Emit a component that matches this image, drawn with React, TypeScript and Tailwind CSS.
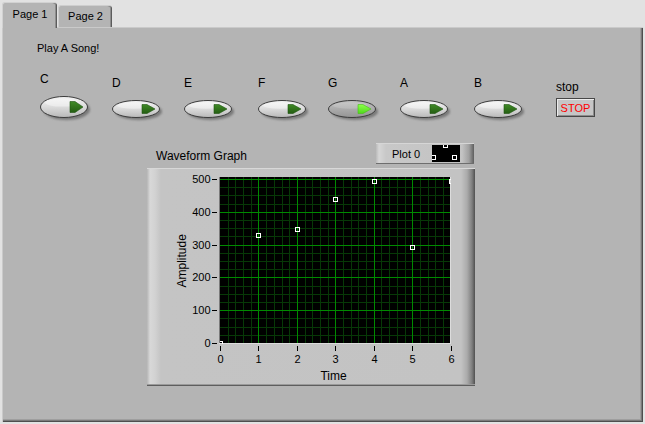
import React from "react";

const FF = "Liberation Sans, Arial, sans-serif";

function Oval({ pressed = false, h }: { pressed?: boolean; h: number }) {
  const cy = h / 2;
  const ry = h / 2 - 0.5;
  const th = h * 0.5;
  const gid = pressed ? "ovFillP" : "ovFill";
  const tid = pressed ? "triP" : "tri";
  return (
    <svg width={54} height={h + 5} className="block overflow-visible">
      <defs>
        <linearGradient id="ovFill" x1="0" y1="0" x2="0" y2="1">
          <stop offset="0" stopColor="#f4f4f4" />
          <stop offset="0.45" stopColor="#dedede" />
          <stop offset="1" stopColor="#b8b8b8" />
        </linearGradient>
        <linearGradient id="ovFillP" x1="0" y1="0" x2="0" y2="1">
          <stop offset="0" stopColor="#c2c2c2" />
          <stop offset="0.5" stopColor="#ababab" />
          <stop offset="1" stopColor="#959595" />
        </linearGradient>
        <linearGradient id="tri" x1="0" y1="0" x2="0" y2="1">
          <stop offset="0" stopColor="#3f8a26" />
          <stop offset="1" stopColor="#245d12" />
        </linearGradient>
        <linearGradient id="triP" x1="0" y1="0" x2="0" y2="1">
          <stop offset="0" stopColor="#8cff4a" />
          <stop offset="1" stopColor="#4fd81c" />
        </linearGradient>
        <filter id="ovBlur" x="-20%" y="-50%" width="140%" height="200%">
          <feGaussianBlur stdDeviation="1.3" />
        </filter>
      </defs>
      <ellipse cx={26.5} cy={cy + 2.5} rx={23.5} ry={ry} fill="#707070" opacity="0.85" filter="url(#ovBlur)" />
      <ellipse cx={24} cy={cy} rx={23.5} ry={ry} fill={`url(#${gid})`} stroke="#3c3c3c" strokeWidth="1" />
      <ellipse cx={22} cy={cy - ry * 0.42} rx={17} ry={ry * 0.38} fill="#ffffff" opacity={pressed ? 0.15 : 0.4} />
      <path
        d={`M30 ${cy - th / 2} L35 ${cy - th / 2} L43 ${cy} L35 ${cy + th / 2} L30 ${cy + th / 2} Z`}
        fill={`url(#${tid})`}
        stroke={pressed ? "#48c018" : "#1f5410"}
        strokeWidth="0.6"
        strokeLinejoin="round"
      />
    </svg>
  );
}

function Control({
  label,
  h,
  pressed,
  ml,
  mt,
}: {
  label: string;
  h: number;
  pressed?: boolean;
  ml: string;
  mt: string;
}) {
  return (
    <div className={`flex flex-col w-[48px] ${ml} ${mt}`}>
      <div className="text-[12px] leading-[14px] h-[14px]">{label}</div>
      <div className="mt-[10px]">
        <Oval h={h} pressed={pressed} />
      </div>
    </div>
  );
}

function Graph() {
  const X0 = 73;
  const XS = 38.45;
  const Y0 = 175;
  const YS = 0.328;
  const xs = (t: number) => X0 + XS * t;
  const ys = (v: number) => Y0 - YS * v;

  const minorX: number[] = [];
  const majorX: number[] = [];
  for (let k = 1; k <= 30; k++) {
    const x = Math.round(X0 + (XS * k) / 5) + 0.5;
    if (k % 5 === 0) majorX.push(x);
    else minorX.push(x);
  }
  const minorY: number[] = [];
  const majorY: number[] = [];
  for (let k = 1; k <= 20; k++) {
    const y = Math.round(Y0 - (32.8 * k) / 4) + 0.5;
    if (y < 9) continue;
    if (k % 4 === 0) majorY.push(y);
    else minorY.push(y);
  }

  const data = [0, 330, 349, 440, 494, 294, 494];

  return (
    <svg width={328} height={218} className="block" style={{ fontFamily: FF }}>
      <defs>
        <clipPath id="plotClip">
          <rect x={73} y={9} width={231} height={167} />
        </clipPath>
      </defs>
      <rect x={72} y={9} width={232} height={167} fill="#000" />
      <g clipPath="url(#plotClip)" shapeRendering="crispEdges">
        {minorX.map((x) => (
          <line key={"mx" + x} x1={x} x2={x} y1={9} y2={176} stroke="#073807" strokeWidth="1" />
        ))}
        {minorY.map((y) => (
          <line key={"my" + y} x1={73} x2={304} y1={y} y2={y} stroke="#073807" strokeWidth="1" />
        ))}
        {majorX.map((x) => (
          <line key={"Mx" + x} x1={x} x2={x} y1={9} y2={176} stroke="#008a00" strokeWidth="1" />
        ))}
        {majorY.map((y) => (
          <line key={"My" + y} x1={73} x2={304} y1={y} y2={y} stroke="#008a00" strokeWidth="1" />
        ))}
      </g>
      <g shapeRendering="crispEdges">
        <line x1={72.5} x2={72.5} y1={9} y2={176} stroke="#7a7a7a" />
        <line x1={303.5} x2={303.5} y1={9} y2={176} stroke="#dcdcdc" />
        <line x1={72} x2={304} y1={175.5} y2={175.5} stroke="#dcdcdc" />
      </g>
      <g clipPath="url(#plotClip)" shapeRendering="crispEdges">
        {data.map((v, t) => {
          const cx = Math.round(xs(t));
          const cy = Math.round(ys(v));
          return (
            <rect
              key={"p" + t}
              x={cx - 2 + 0.5}
              y={cy - 2 + 0.5}
              width={4}
              height={4}
              fill="none"
              stroke="#ffffff"
              strokeWidth="1"
            />
          );
        })}
      </g>
      {[0, 100, 200, 300, 400, 500].map((v) => {
        const y = Math.round(ys(v)) + 0.5;
        return (
          <g key={"yt" + v}>
            <line x1={65} x2={70} y1={y} y2={y} stroke="#000" shapeRendering="crispEdges" />
            <text x={63.5} y={y + 3.7} fontSize="11" textAnchor="end" fill="#000">
              {v}
            </text>
          </g>
        );
      })}
      {[0, 1, 2, 3, 4, 5, 6].map((t) => {
        const x = Math.round(xs(t)) + 0.5;
        return (
          <g key={"xt" + t}>
            <line x1={x} x2={x} y1={178} y2={183} stroke="#000" shapeRendering="crispEdges" />
            <text x={x} y={194.7} fontSize="11" textAnchor="middle" fill="#000">
              {t}
            </text>
          </g>
        );
      })}
      <text transform="translate(38.5,92.8) rotate(-90)" fontSize="12" textAnchor="middle" fill="#000">
        Amplitude
      </text>
      <text x={186.5} y={212} fontSize="12" textAnchor="middle" fill="#000">
        Time
      </text>
    </svg>
  );
}

export default function App() {
  return (
    <div className="w-[645px] h-[424px] bg-[#e2e2e2] overflow-hidden font-['Liberation_Sans',Arial,sans-serif] text-black">
      {/* Tabs */}
      <div className="flex items-end h-[27px] pl-[2px]">
        <div className="relative z-10 -mb-px h-[26px] w-[55px] bg-[#b4b4b4] rounded-t-[3px] border-t border-l border-[#d2d2d2] shadow-[inset_-1px_0_0_#5c5c5c,inset_-2px_0_0_#8e8e8e] flex justify-center pt-[5px] text-[11px] leading-[13px]">
          Page 1
        </div>
        <div className="ml-px h-[22px] w-[54px] bg-[#b4b4b4] rounded-t-[3px] border-t border-l border-[#cecece] shadow-[inset_-1px_0_0_#5c5c5c,inset_-2px_0_0_#8e8e8e] flex justify-center pt-[4px] text-[11px] leading-[13px]">
          Page 2
        </div>
      </div>

      {/* Panel */}
      <div className="ml-[2px] w-[641px] h-[395px] bg-[#b4b4b4] shadow-[inset_1px_1px_0_#cacaca,inset_-1px_-1px_0_#4e4e4e,inset_-2px_-2px_0_#7a7a7a,inset_-3px_-3px_0_#9e9e9e] pt-[14px] pl-[35px] flex flex-col items-start">
        <div className="text-[11px] leading-[14px] h-[14px]">Play A Song!</div>

        {/* Controls */}
        <div className="mt-[17px] h-[50px] flex items-start">
          <Control label="C" h={22} ml="ml-[3px]" mt="mt-0" />
          <Control label="D" h={18} ml="ml-[24px]" mt="mt-[4px]" />
          <Control label="E" h={18} ml="ml-[24px]" mt="mt-[4px]" />
          <Control label="F" h={18} ml="ml-[26px]" mt="mt-[4px]" />
          <Control label="G" h={18} pressed ml="ml-[22px]" mt="mt-[4px]" />
          <Control label="A" h={18} ml="ml-[24px]" mt="mt-[4px]" />
          <Control label="B" h={18} ml="ml-[26px]" mt="mt-[4px]" />
          <div className="ml-[34px] mt-[8px] flex flex-col">
            <div className="text-[12px] leading-[14px] h-[14px]">stop</div>
            <div className="mt-[4px] w-[39px] h-[19px] border border-[#474747] bg-[#c6c6c6] shadow-[inset_1px_1px_0_#ececec,inset_-1px_-1px_0_#8c8c8c] flex justify-center pt-[3px] text-[11px] leading-[13px] text-[#ff0000]">
              STOP
            </div>
          </div>
        </div>

        {/* Waveform graph */}
        <div className="mt-[21px] ml-[110px] w-[328px] flex flex-col">
          <div className="h-[25px] flex justify-between items-start">
            <div className="mt-[6px] ml-[9px] text-[12px] leading-[14px]">Waveform Graph</div>
            <div className="mr-px w-[98px] h-[21px] flex items-center pl-[16px] bg-[linear-gradient(to_right,#bababa_0px,#d6d6d6_3px,#c8c8c8_10px,#c3c3c3_86px,#a0a0a0_93px,#5e5e5e_98px)] shadow-[inset_0_1px_0_#d6d6d6,inset_0_-1px_0_#6e6e6e]">
              <span className="w-[40px] text-[11px] leading-[14px]">Plot 0</span>
              <svg width={28} height={17} className="block bg-black" shapeRendering="crispEdges">
                <rect x={11.5} y={-1.5} width={4} height={4} fill="none" stroke="#fff" />
                <rect x={-0.5} y={10.5} width={4} height={4} fill="none" stroke="#fff" />
                <rect x={20.5} y={10.5} width={4} height={4} fill="none" stroke="#fff" />
              </svg>
            </div>
          </div>
          <div className="w-[328px] h-[218px] bg-[linear-gradient(to_right,#b6b6b6_0px,#d8d8d8_3px,#d2d2d2_8px,#c4c4c4_14px,#c3c3c3_314px,#ababab_320px,#7e7e7e_325px,#505050_328px)] shadow-[inset_0_1px_0_#d8d8d8,inset_0_-1px_0_#5e5e5e,inset_0_-2px_0_#9a9a9a]">
            <Graph />
          </div>
        </div>
      </div>
    </div>
  );
}
